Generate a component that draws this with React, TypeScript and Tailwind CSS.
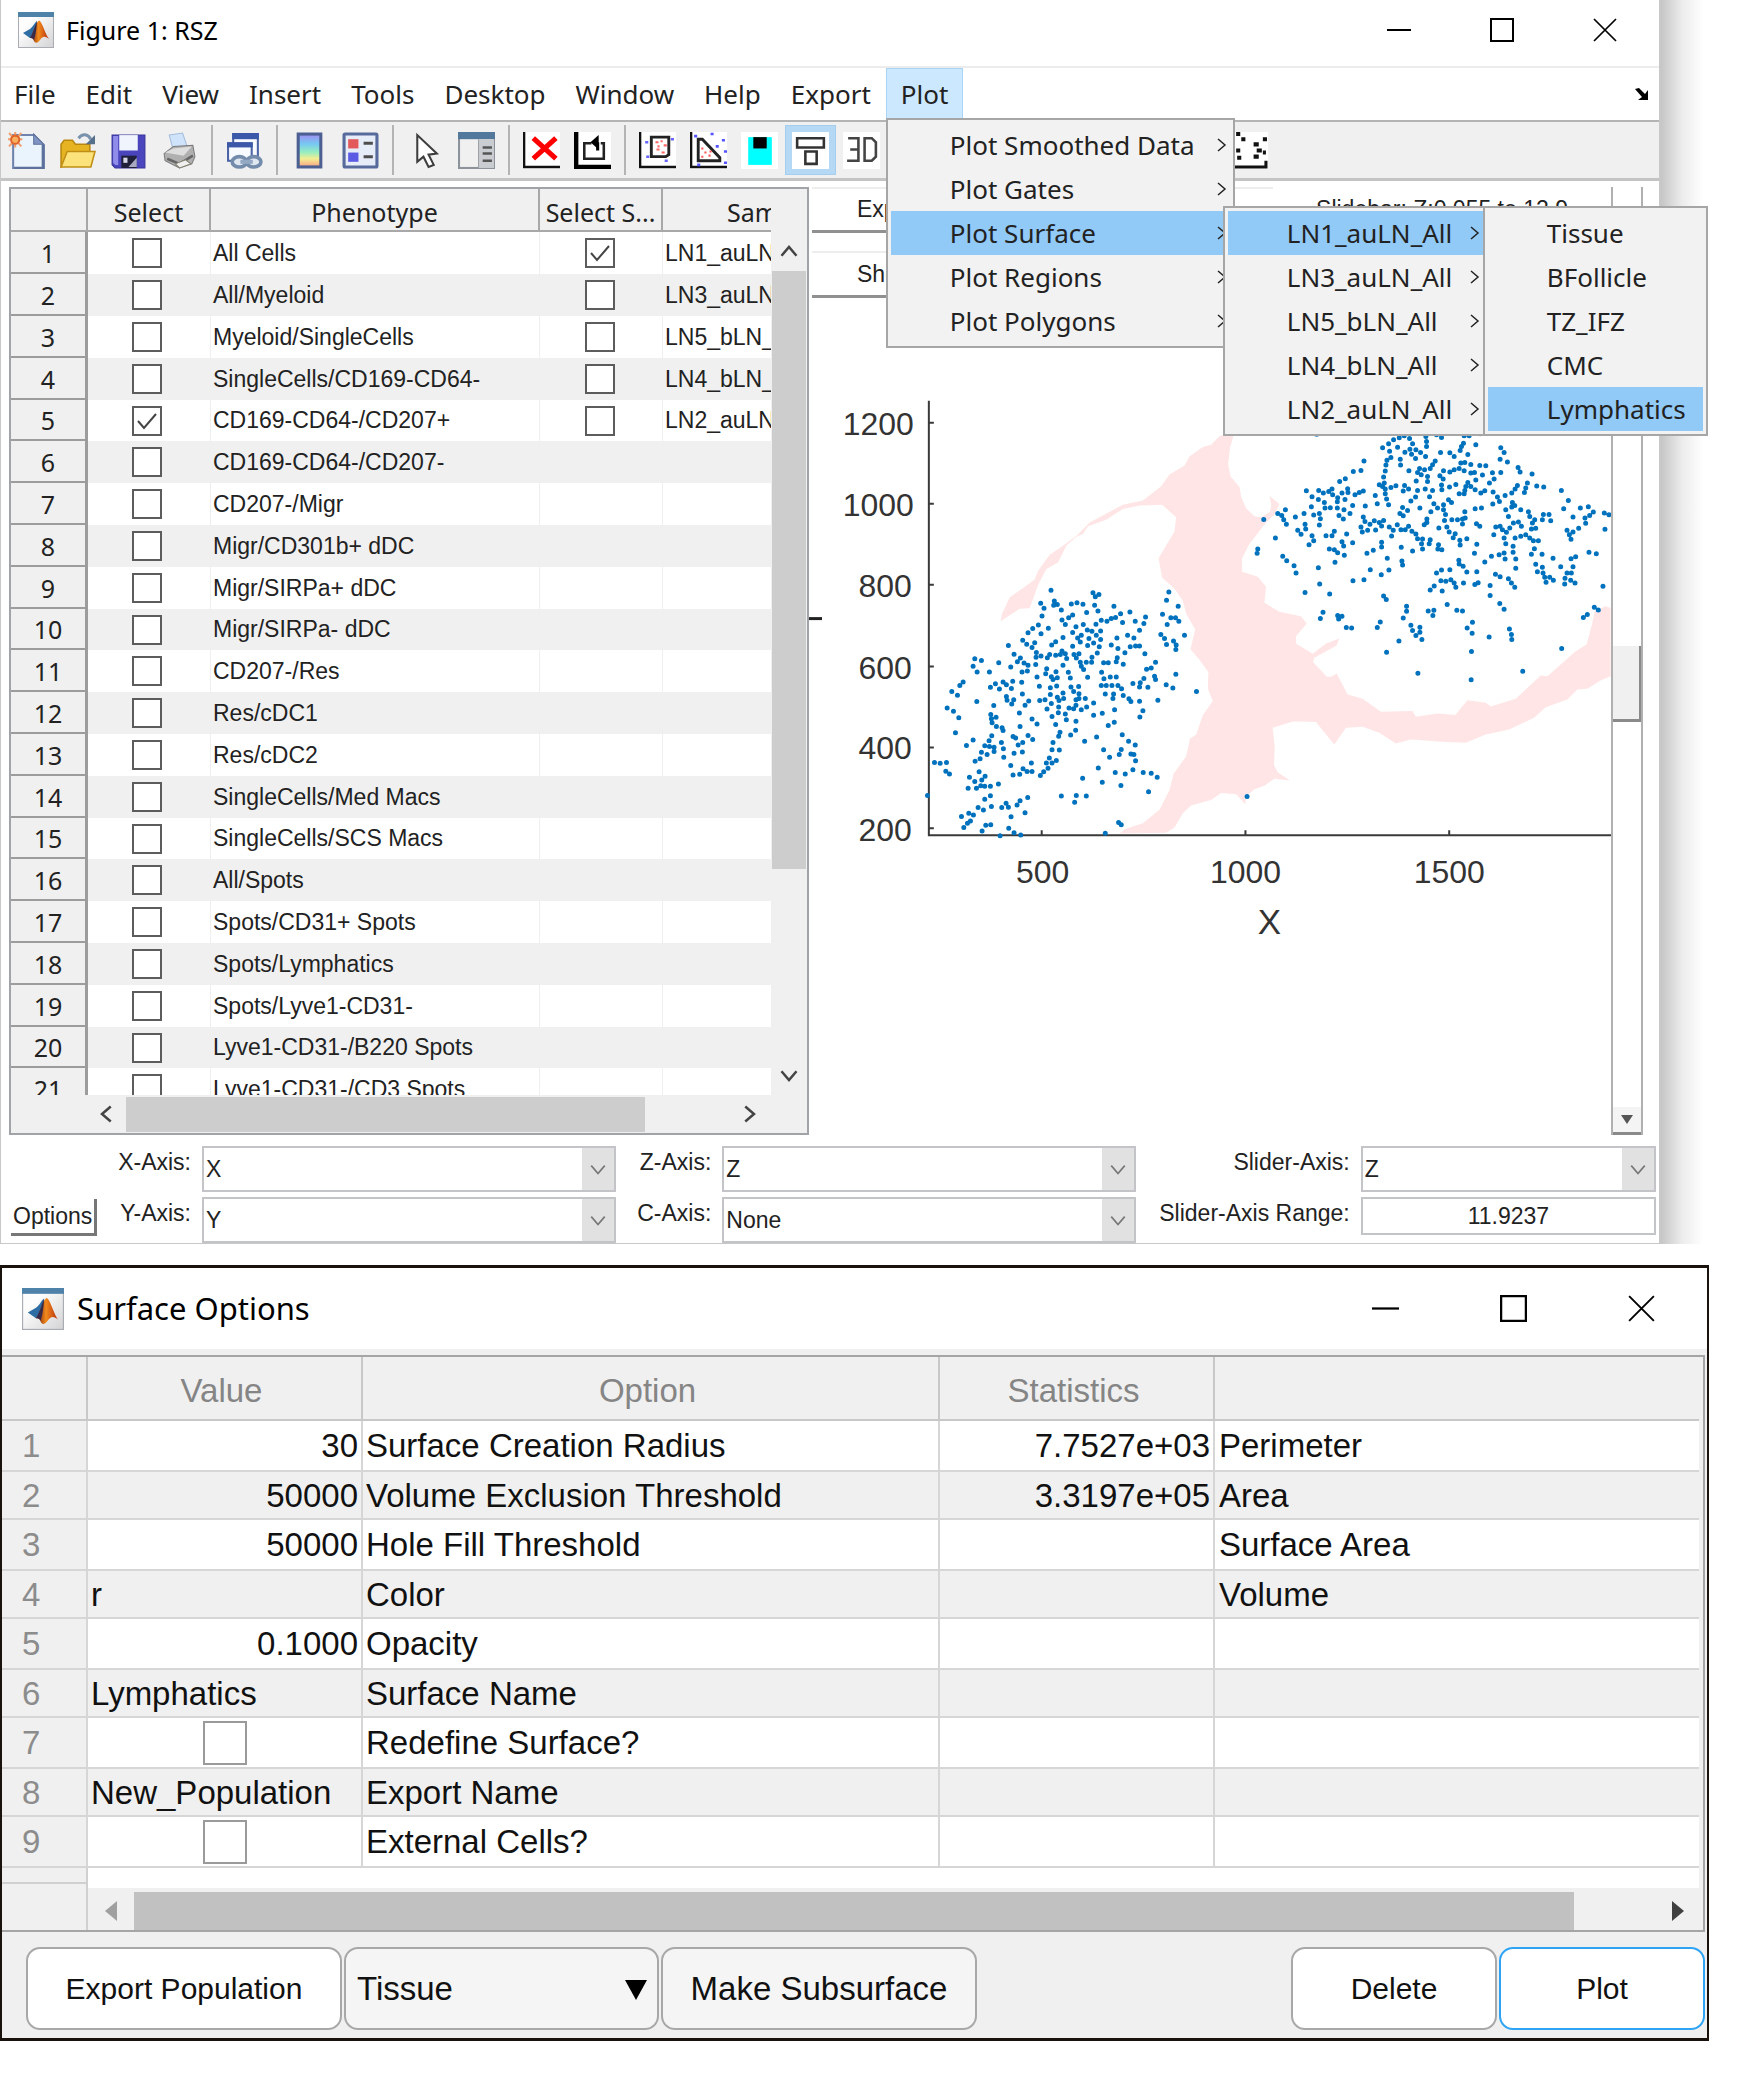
import React from "react";

const SEGOE = "font-['Noto_Sans','Open_Sans',sans-serif]";
const ARIAL = "font-['Liberation_Sans',Arial,sans-serif]";

const phenotypes = [
  "All Cells",
  "All/Myeloid",
  "Myeloid/SingleCells",
  "SingleCells/CD169-CD64-",
  "CD169-CD64-/CD207+",
  "CD169-CD64-/CD207-",
  "CD207-/Migr",
  "Migr/CD301b+ dDC",
  "Migr/SIRPa+ dDC",
  "Migr/SIRPa- dDC",
  "CD207-/Res",
  "Res/cDC1",
  "Res/cDC2",
  "SingleCells/Med Macs",
  "SingleCells/SCS Macs",
  "All/Spots",
  "Spots/CD31+ Spots",
  "Spots/Lymphatics",
  "Spots/Lyve1-CD31-",
  "Lyve1-CD31-/B220 Spots",
  "Lyve1-CD31-/CD3 Spots",
];

const samples = ["LN1_auLN_All", "LN3_auLN_All", "LN5_bLN_All", "LN4_bLN_All", "LN2_auLN_All"];

const leftCells =
  "754,590 880,597 898,602 887,608 723,626 733,640 727,662 764,620 762,632 773,630 815,628 832,625 850,629 885,632 943,635 1108,595 1101,618 1136,635 785,645 861,652 895,648 963,656 991,651 1089,657 819,659 807,667 787,673 797,686 905,674 922,677 935,669 948,666 969,680 1007,677 1038,665 1033,683 1114,667 1128,667 1138,677 1103,686 851,686 889,685 716,687 746,696 699,697 685,709 724,712 829,692 819,708 863,701 877,705 903,704 845,716 890,716 868,725 834,724 1020,702 984,716 1003,724 952,724 1084,714 1095,725 1155,716 1122,732 1130,743 1129,756 1101,742 790,722 768,734 756,743 705,737 669,730 681,741 697,750 626,745 842,735 903,728 882,738 864,745 899,748 819,747 935,743 955,753 1008,746 992,748 1020,746 976,765 1036,768 893,766 643,769 787,760 797,768 710,764 709,778 724,774 743,779 750,770 768,772 782,770 801,781 823,770 838,768 830,780 662,780 653,790 673,794 685,800 708,798 525,782 545,787 520,803 532,819 597,793 569,819 633,805 667,819 683,816 790,800 741,810 738,824 769,818 806,820 842,792 845,803 852,812 860,792 877,778 876,792 912,793 926,793 950,790 953,779 971,797 1068,792 1055,808 1041,811 1129,825 1065,831 1068,840 906,820 913,838 932,833 950,833 864,834 812,836 755,832 773,835 760,840 712,833 639,845 666,848 610,847 620,855 635,865 587,852 572,862 599,867 490,847 480,857 456,874 473,884 719,859 752,863 771,858 814,861 837,860 822,874 905,857 920,857 937,857 955,857 966,866 1000,851 1022,849 1033,837 1020,861 1045,862 1100,855 1120,864 1191,874 752,882 790,878 838,880 838,893 857,893 917,881 942,881 940,893 971,885 988,894 994,902 1020,901 1075,898 882,906 861,917 845,925 668,881 620,888 622,898 642,897 636,909 687,900 676,912 531,902 582,913 720,899 736,897 755,907 773,890 778,899 792,893 742,923 777,917 808,920 822,922 829,912 829,897 776,933 797,937 757,944 659,934 573,938 575,950 589,946 577,961 590,972 607,975 610,983 442,920 461,929 477,947 882,940 908,935 945,925 1030,928 1021,945 800,953 829,957 768,966 712,965 697,951 661,972 944,960 926,969 828,982 813,996 781,988 777,999 891,1001 968,995 987,1013 1007,1024 855,1013 467,989 500,1025 520,1010 576,998 568,1012 555,1026 569,1028 583,1030 583,1042 562,1050 545,1044 605,1017 611,1034 640,1000 648,1004 669,1017 655,1024 685,997 699,1008 760,1017 757,1037 779,1038 912,1037 965,1036 959,1050 930,1058 994,1049 1003,1050 1008,1068 643,1047 668,1043 612,1058 541,1062 526,1069 749,1060 770,1067 740,1074 757,1074 745,1089 732,1099 722,1109 633,1081 695,1074 670,1090 682,1098 697,1098 660,1106 640,1108 404,1073 421,1075 440,1073 438,1097 449,1105 896,1088 849,1117 908,1128 947,1101 977,1105 1000,1093 1031,1101 1055,1103 1073,1114 964,1137 1047,1155 538,1099 509,1114 525,1126 546,1122 556,1111 505,1145 530,1145 543,1138 555,1139 572,1139 596,1133 383,1165 785,1167 830,1165 825,1184 860,1167 572,1166 555,1176 575,1196 535,1199 551,1206 606,1199 619,1187 626,1198 661,1180 652,1192 684,1171 676,1214 634,1225 485,1224 507,1215 521,1220 512,1237 503,1243 492,1255 558,1249 573,1247 547,1265 627,1257 643,1270 601,1278 663,1276 917,1271 957,1241 965,1247 1343,1168";

const rightCells =
  "352,43 615,48 600,54 583,60 568,72 550,84 595,82 571,94 631,56 640,72 632,88 650,90 617,97 680,50 682,65 682,80 712,45 727,53 795,48 810,48 843,42 830,75 793,70 787,80 783,92 806,104 752,99 724,98 765,110 679,110 664,98 649,116 637,103 905,84 915,98 903,118 925,127 957,143 963,157 999,163 575,113 563,121 560,136 558,154 553,172 603,118 604,136 494,124 485,152 462,155 708,124 700,135 693,146 661,146 655,158 676,150 666,165 629,153 733,153 685,170 732,178 722,168 651,184 685,185 752,157 765,150 780,146 785,130 797,128 795,153 815,134 842,137 860,138 850,166 826,158 815,160 880,159 905,158 885,178 871,190 830,181 806,188 438,177 421,185 321,213 338,231 358,212 372,220 388,215 398,208 400,225 357,239 375,248 428,220 445,207 446,218 437,239 415,234 414,246 467,225 480,218 492,214 540,195 550,200 555,190 558,208 558,222 562,238 568,255 575,203 590,198 528,227 534,252 498,259 616,197 628,208 612,214 655,212 678,208 700,212 649,232 635,244 691,231 727,196 728,210 751,202 770,194 800,200 797,212 780,222 795,222 815,200 828,210 845,220 857,213 955,197 948,208 938,220 985,190 980,205 976,218 1013,199 1034,202 1087,212 1108,242 1094,267 882,217 895,232 901,245 881,253 918,227 940,248 748,240 757,248 733,255 704,252 715,265 695,276 662,265 610,263 625,272 602,281 612,288 336,261 314,281 343,286 360,281 363,297 360,316 288,292 377,265 393,264 414,265 434,270 419,287 432,298 452,281 460,257 258,270 235,281 247,287 253,300 261,314 193,299 228,355 317,314 319,328 295,332 305,344 338,348 343,363 329,375 380,348 398,348 405,335 442,343 428,366 433,379 460,369 175,388 173,401 250,410 262,423 284,438 290,460 390,388 405,390 415,399 435,407 407,428 357,444 492,292 497,305 485,322 489,337 505,332 512,314 525,303 540,308 553,302 547,319 529,331 570,322 582,332 577,349 594,315 605,330 618,330 628,320 638,335 650,343 655,357 670,358 667,372 670,388 690,372 693,360 716,388 718,375 728,390 683,298 683,308 675,315 733,270 739,284 736,302 743,322 750,337 719,325 758,300 775,300 790,298 797,276 798,295 790,313 768,342 762,354 782,362 783,376 803,357 833,374 826,401 828,267 847,265 832,312 842,320 920,270 938,262 947,257 965,270 928,290 988,276 992,290 943,310 958,307 967,320 932,325 922,338 890,322 903,320 910,330 884,345 915,355 920,372 948,355 965,350 980,345 992,355 1003,363 1018,363 997,328 1010,326 1000,310 1007,300 1030,300 1033,284 1050,284 1055,303 1122,292 1144,265 1168,261 1183,277 1172,287 1158,295 1160,311 1216,280 1230,285 1218,329 1104,332 1122,337 1139,326 1111,345 1116,359 1170,398 1192,402 942,380 942,398 950,418 918,418 900,405 915,400 877,410 857,427 1006,387 997,404 1029,404 1062,416 1116,417 1130,411 1085,441 1122,441 1010,434 1030,443 1015,456 1032,460 1037,473 1052,473 1063,482 1041,488 1104,460 1117,460 1098,476 1115,482 1128,490 1097,493 1212,500 1186,563 1198,571 1165,585 1153,594 950,446 889,464 903,471 928,477 937,490 947,503 873,498 873,528 833,456 837,489 827,495 793,490 803,457 792,440 779,422 780,433 752,450 727,451 712,460 725,483 740,485 755,480 765,490 770,503 705,499 693,511 729,514 606,383 640,394 547,368 547,382 522,392 503,401 564,416 608,424 610,436 569,451 546,465 513,450 494,480 461,483 361,493 391,523 317,519 553,529 561,540 622,560 622,575 612,595 371,578 363,597 415,588 428,590 418,598 441,624 457,625 543,607 534,624 687,574 704,572 701,588 744,555 773,572 790,574 902,552 915,569 931,628 937,645 938,660 635,617 640,633 662,623 662,638 650,648 668,660 820,608 804,625 819,641 599,664 562,698 870,652 817,696 1088,687 656,761 816,781 971,755";

const dots = (points: string) =>
  points
    .split(" ")
    .map((p) => `M${p.replace(",", " ")}h.01`)
    .join("");

function MatlabIcon({ className }: { className: string }) {
  return (
    <svg viewBox="0 0 36 36" className={className} aria-hidden="true">
      <defs>
        <linearGradient id="mlPaper" x1="0" y1="0" x2="1" y2="1">
          <stop offset="0.3" stopColor="#fdfdfd" />
          <stop offset="1" stopColor="#d3d3d5" />
        </linearGradient>
        <linearGradient id="mlPeak" x1="0" y1="0" x2="1" y2="0">
          <stop offset="0" stopColor="#6b1508" />
          <stop offset="0.45" stopColor="#f28a1c" />
          <stop offset="1" stopColor="#b62e0f" />
        </linearGradient>
      </defs>
      <rect x="0.5" y="0.5" width="35" height="35" fill="url(#mlPaper)" stroke="#a9adb3" />
      <rect x="0" y="0" width="36" height="5" fill="#4f82a8" />
      <path d="M5 21 L12 17 C15 15 17 10 19 9 L17 22 L12 26 Z" fill="#2e6da4" />
      <path d="M12 26 C15 22 18 10 21 8.500 C24 9 27 22 31 27 C27 24 25 24 22 28 C19 32 17 31 16 29 C15 26 13.500 26 12 26 Z" fill="url(#mlPeak)" />
      <path d="M12 26 C15 22 17 13 19 9.500 C18.500 16 18 22 16 28 C15 26 13.500 26 12 26 Z" fill="#3a2a4a" />
    </svg>
  );
}

function WindowButtons({ width, size }: { width: string; size: string }) {
  return (
    <div className="flex self-stretch">
      <button aria-label="Minimize" className={`${width} flex items-center justify-center`}>
        <svg viewBox="0 0 24 24" className={size} stroke="#000" strokeWidth="2" fill="none">
          <path d="M0 12H24" />
        </svg>
      </button>
      <button aria-label="Maximize" className={`${width} flex items-center justify-center`}>
        <svg viewBox="0 0 24 24" className={size} stroke="#000" strokeWidth="2" fill="none">
          <rect x="1" y="1" width="22" height="22" />
        </svg>
      </button>
      <button aria-label="Close" className={`${width} flex items-center justify-center`}>
        <svg viewBox="0 0 24 24" className={size} stroke="#000" strokeWidth="1.700" fill="none">
          <path d="M1 1L23 23M23 1L1 23" />
        </svg>
      </button>
    </div>
  );
}

function Chevron({ dir, className }: { dir: "up" | "down" | "left" | "right"; className: string }) {
  const d = {
    up: "M2 11L8 4L14 11",
    down: "M2 5L8 12L14 5",
    left: "M11 2L4 8L11 14",
    right: "M5 2L12 8L5 14",
  }[dir];
  return (
    <svg viewBox="0 0 16 16" className={className} fill="none" stroke="currentColor" aria-hidden="true">
      <path d={d} />
    </svg>
  );
}

/* ---------- toolbar ---------- */

function ToolButton({ label, pressed, children }: { label: string; pressed?: boolean; children: React.ReactNode }) {
  return (
    <button
      aria-label={label}
      className={`flex h-[50px] w-[51px] shrink-0 items-center justify-center ${pressed ? "border border-[#a5cdee] bg-[#b5d8f4]" : ""}`}
    >
      <svg viewBox="0 0 36 36" className="h-[37px] w-[37px]" fill="none">
        {children}
      </svg>
    </button>
  );
}

const Sep = () => (
  <div className="flex w-[14px] shrink-0 justify-center">
    <div className="h-[50px] w-[2px] bg-[#b4b4b4]" />
  </div>
);

function Toolbar() {
  return (
    <div className="flex h-[61px] items-center border-t-2 border-b-3 border-t-[#b4b4b4] border-b-[#c4c4c4] bg-[#f0f0f0]">
      <ToolButton label="New Figure">
        <path d="M5 3H25L35 13V35H5Z" fill="#eaf4fd" stroke="#6f84ad" strokeWidth="2" />
        <path d="M34 12V35H6" stroke="#5e719c" strokeWidth="2.500" />
        <path d="M25 2V12H35Z" fill="#8094c4" stroke="#5e719c" />
        <path d="M1 1L13 14M13 1L1 14M7 0V15M0 7H14" stroke="#f0a070" strokeWidth="2" />
        <circle cx="7" cy="7.500" r="4" fill="#f9b060" stroke="#e0652a" strokeWidth="2" />
      </ToolButton>
      <ToolButton label="Open File">
        <path d="M2 34V12L5 8H13L16 12H30V20Z" fill="#e6b422" stroke="#b98710" strokeWidth="1.500" />
        <path d="M2 34L8 19H35L31 34Z" fill="#fbe27a" stroke="#c08e14" strokeWidth="1.500" />
        <path d="M19 6C23 1 28 2 31 7" stroke="#7a93ac" strokeWidth="3" />
        <path d="M35 3V12H26Z" fill="#56708c" />
      </ToolButton>
      <ToolButton label="Save Figure">
        <path d="M2 3H34V35H5L2 32Z" fill="#4a45bd" stroke="#38349a" />
        <path d="M3 4H8V32H5L3 30Z" fill="#8f8cea" />
        <rect x="9" y="3" width="18" height="15" fill="#f0f4fc" />
        <rect x="11" y="23" width="15" height="12" fill="#20203a" />
        <rect x="13" y="25" width="4" height="5" fill="#d5d5e8" />
        <path d="M18 34L26 25V34Z" fill="#a9a9c2" />
      </ToolButton>
      <ToolButton label="Print Figure">
        <path d="M8 3L21 1L26 16L12 18Z" fill="#cfe3fb" stroke="#a3bddd" />
        <path d="M3 21L12 14L31 13L33 24L30 31L18 35L4 28Z" fill="#b0b0b0" stroke="#7b7b7b" />
        <path d="M4 20L12 16L30 14L22 23Z" fill="#dedede" />
        <path d="M6 26L18 31L31 23" stroke="#666" strokeWidth="2.500" />
        <path d="M14 31L24 27L29 31L18 35Z" fill="#f0f0f0" stroke="#808070" />
      </ToolButton>
      <Sep />
      <ToolButton label="Link Plot">
        <rect x="7" y="2" width="24" height="22" fill="#f7faff" stroke="#4a63a5" strokeWidth="2" />
        <rect x="6" y="1" width="26" height="6" fill="#3c58a8" />
        <rect x="2" y="11" width="23" height="17" fill="#f7faff" stroke="#4a63a5" strokeWidth="2" />
        <rect x="1" y="10" width="25" height="5" fill="#3c58a8" />
        <ellipse cx="13" cy="29" rx="7" ry="5" fill="#dfe7f1" stroke="#748cab" strokeWidth="3.500" />
        <ellipse cx="27" cy="29" rx="7" ry="5" fill="#dfe7f1" stroke="#748cab" strokeWidth="3.500" />
        <path d="M14 29H26" stroke="#93a8c2" strokeWidth="4" />
      </ToolButton>
      <Sep />
      <ToolButton label="Insert Colorbar">
        <defs>
          <linearGradient id="cbar" x1="0" y1="0" x2="0" y2="1">
            <stop offset="0" stopColor="#a18cf0" />
            <stop offset="0.300" stopColor="#76c8f2" />
            <stop offset="0.550" stopColor="#96eec0" />
            <stop offset="0.750" stopColor="#f4ee92" />
            <stop offset="1" stopColor="#f6a184" />
          </linearGradient>
        </defs>
        <rect x="7" y="2" width="22" height="32" fill="url(#cbar)" stroke="#4c5f92" strokeWidth="3" />
      </ToolButton>
      <ToolButton label="Insert Legend">
        <rect x="2" y="2" width="32" height="32" rx="1" fill="#e7edf8" stroke="#566a9b" strokeWidth="3" />
        <rect x="6" y="7" width="10" height="9" fill="#e35a5a" />
        <rect x="6" y="20" width="10" height="9" fill="#5b5be3" />
        <path d="M21 11H30M21 24H30" stroke="#4d4d4d" strokeWidth="3" />
      </ToolButton>
      <Sep />
      <ToolButton label="Edit Plot">
        <path d="M10 3V29L16 24L21 34L26 32L21 22L29 21Z" fill="#fff" stroke="#3d3d3d" strokeWidth="2" />
      </ToolButton>
      <ToolButton label="Property Inspector">
        <rect x="1" y="1" width="34" height="34" fill="#f0f0f0" stroke="#8d939b" strokeWidth="2" />
        <rect x="0" y="0" width="36" height="7" fill="#52799b" />
        <rect x="20" y="7" width="15" height="28" fill="#c9ccd0" />
        <path d="M20 7V35" stroke="#9da1a6" />
        <path d="M24 15H33M24 21H33M24 28H33" stroke="#555" strokeWidth="2.500" />
      </ToolButton>
      <Sep />
      <ToolButton label="Clear Gate">
        <rect width="36" height="36" fill="#fff" />
        <path d="M1 0V34H36" stroke="#111" strokeWidth="2.500" />
        <path d="M10 6L32 26M32 6L10 26" stroke="#f00" strokeWidth="5" />
      </ToolButton>
      <ToolButton label="Rotate Axes">
        <rect width="36" height="36" fill="#fff" />
        <path d="M2 0V34H36" stroke="#000" strokeWidth="4.500" />
        <path d="M17 11H10V26H29V11H26" stroke="#222" strokeWidth="2.500" />
        <path d="M16 10L24 3V17Z" fill="#000" />
        <path d="M23 10V18" stroke="#000" strokeWidth="3" />
      </ToolButton>
      <Sep />
      <ToolButton label="Rectangle Gate">
        <rect width="36" height="36" fill="#fff" />
        <path d="M1 0V34H36" stroke="#111" strokeWidth="2.500" />
        <path d="M12 5H29V22L26 24H12Z" stroke="#222" strokeWidth="2.800" />
        <path d="M16 10h3M24 13h3M17 17h3M22 20h3M18 14h2M21 9h2" stroke="#f66" strokeWidth="2" />
        <path d="M6 10h3M7 24h3M31 7h3M25 28h3" stroke="#66f" strokeWidth="2.500" />
      </ToolButton>
      <ToolButton label="Polygon Gate">
        <rect width="36" height="36" fill="#fff" />
        <path d="M1 0V34H36" stroke="#111" strokeWidth="2.500" />
        <path d="M8 7H12L29 25V28H8Z" stroke="#222" strokeWidth="2.800" />
        <path d="M11 16h2M14 20h2M18 23h2M11 24h2M19 19h2" stroke="#f55" strokeWidth="2" />
        <path d="M20 2h3M31 8h3M25 14h3M33 19h3M33 30h3M7 32h3M4 4h3" stroke="#55f" strokeWidth="2.500" />
      </ToolButton>
      <ToolButton label="Color">
        <rect width="36" height="36" fill="#fff" />
        <rect x="7" y="5" width="23" height="27" fill="#00ffff" />
        <rect x="12" y="5" width="13" height="11" fill="#000" />
      </ToolButton>
      <ToolButton label="Arrange" pressed>
        <rect width="36" height="36" fill="#fff" />
        <path d="M5 6H31V15H5ZM13 19H24V31H13Z" stroke="#333" strokeWidth="2.500" />
      </ToolButton>
      <ToolButton label="3D">
        <rect width="36" height="36" fill="#fff" />
        <path d="M5 6H15V28H4M7 17H15" stroke="#444" strokeWidth="2.500" />
        <path d="M21 6H28L32 10V24L28 28H21Z" stroke="#444" strokeWidth="2.500" />
      </ToolButton>
      <div className="w-[337px]" />
      <ToolButton label="Scatter">
        <rect width="36" height="36" fill="#fff" />
        <path d="M0 34H34V28" stroke="#111" strokeWidth="3" />
        <path d="M5 2h4M10 7h4M31 7h4M22 12h5M5 18h4M25 18h5M6 25h4M22 24h5M31 20h3" stroke="#111" strokeWidth="4" />
      </ToolButton>
    </div>
  );
}

/* ---------- menus ---------- */

function MenuItem({ label, active, arrow = true, children }: { label: string; active?: boolean; arrow?: boolean; children?: React.ReactNode }) {
  return (
    <li className="relative">
      <button className={`flex h-[44px] w-full items-center pl-[59px] text-left whitespace-nowrap ${active ? "bg-[#91c9f7]" : ""}`}>
        <span className="flex-1">{label}</span>
        {arrow && <Chevron dir="right" className="mr-[1px] h-[16px] w-[16px] stroke-[1.5]" />}
      </button>
      {children}
    </li>
  );
}

const menuBox = "absolute border-2 border-[#a6a6a6] bg-[#f2f2f2] py-[3px] pl-[3px] text-[#222]";

function PlotMenu() {
  return (
    <ul className={`${menuBox} top-full left-0 z-20 mt-[-2px] w-[349px] pr-[3px]`}>
      <MenuItem label="Plot Smoothed Data" />
      <MenuItem label="Plot Gates" />
      <MenuItem label="Plot Surface" active>
        <ul className={`${menuBox} top-[-5px] left-[332px] z-30 w-[262px]`}>
          <MenuItem label="LN1_auLN_All" active>
            <ul className={`${menuBox} top-[-5px] left-[255px] z-40 w-[225px] pr-[3px]`}>
              <MenuItem label="Tissue" arrow={false} />
              <MenuItem label="BFollicle" arrow={false} />
              <MenuItem label="TZ_IFZ" arrow={false} />
              <MenuItem label="CMC" arrow={false} />
              <MenuItem label="Lymphatics" arrow={false} active />
            </ul>
          </MenuItem>
          <MenuItem label="LN3_auLN_All" />
          <MenuItem label="LN5_bLN_All" />
          <MenuItem label="LN4_bLN_All" />
          <MenuItem label="LN2_auLN_All" />
        </ul>
      </MenuItem>
      <MenuItem label="Plot Regions" />
      <MenuItem label="Plot Polygons" />
    </ul>
  );
}

function MenuBar() {
  return (
    <nav className={`${SEGOE} flex h-[54px] items-stretch border-t-2 border-[#ececec] text-[26px] text-[#222]`}>
      {["File", "Edit", "View", "Insert", "Tools", "Desktop", "Window", "Help", "Export"].map((m) => (
        <button key={m} className="px-[15px] first:pl-[13px]">
          {m}
        </button>
      ))}
      <div className="relative flex">
        <button className="border border-[#a9d4f5] bg-[#cce8ff] px-[14px]">Plot</button>
        <PlotMenu />
      </div>
      <button aria-label="Dock" className="mr-[9px] ml-auto">
        <svg viewBox="0 0 16 14" className="h-[14px] w-[16px]">
          <path d="M1 2L5 1L11 7L14 3V13H4L8 10Z" fill="#000" />
        </svg>
      </button>
    </nav>
  );
}

/* ---------- phenotype table ---------- */

function Tick({ label, checked }: { label: string; checked?: boolean }) {
  return (
    <label className="relative mx-auto block h-[30px] w-[30px]">
      <input type="checkbox" aria-label={label} defaultChecked={checked} className="peer block h-[30px] w-[30px] appearance-none border-2 border-[#5c5c5c] bg-white" />
      <svg viewBox="0 0 30 30" className="pointer-events-none absolute inset-0 hidden h-[30px] w-[30px] peer-checked:block" fill="none" stroke="#444" strokeWidth="2">
        <path d="M6 15L12 22L24 8" />
      </svg>
    </label>
  );
}

function PhenotypeTable() {
  const head = "h-[43px] overflow-hidden border-b-2 border-[#a8a8a8] bg-[#f0f0f0] p-0 pt-[6px] font-normal whitespace-nowrap";
  return (
    <div className="ml-[8px] grid w-[800px] shrink-0 grid-cols-[1fr_36px] grid-rows-[906px_38px] border-2 border-[#a0a3a8] bg-[#f0f0f0]">
      <div className="overflow-hidden">
        <table className={`${ARIAL} w-full table-fixed border-separate border-spacing-0 text-[23px] leading-none text-[#222]`}>
          <colgroup>
            <col className="w-[77px]" />
            <col className="w-[123px]" />
            <col className="w-[329px]" />
            <col className="w-[123px]" />
            <col />
          </colgroup>
          <thead>
            <tr className={`${SEGOE} text-[25px]`}>
              <th className={`${head} border-r-2`} aria-label="Row" />
              <th className={`${head} border-r-2`}>Select</th>
              <th className={`${head} border-r-2`}>Phenotype</th>
              <th className={`${head} border-r-2`}>Select S...</th>
              <th className={`${head} pl-[64px] text-left`}>Sample</th>
            </tr>
          </thead>
          <tbody>
            {phenotypes.map((name, i) => (
              <tr key={name} className="h-[42px] odd:bg-white even:bg-[#f0f0f0] nth-[5n]:h-[41px]">
                <th className={`${SEGOE} border-r-3 border-b-2 border-[#9c9c9c] bg-[#f0f0f0] p-0 pt-[2px] text-[25px] font-normal`}>{i + 1}</th>
                <td className="border-r border-[#efefef] p-0 pr-[4px]">
                  <Tick label={`Select ${name}`} checked={i === 4} />
                </td>
                <td className="border-r border-[#efefef] p-0 pl-[2px] whitespace-nowrap">{name}</td>
                <td className="border-r border-[#efefef] p-0 pr-[2px]">{i < 5 && <Tick label={`Select ${samples[i]}`} checked={i === 0} />}</td>
                <td className="overflow-hidden p-0 pl-[2px] whitespace-nowrap">{samples[i]}</td>
              </tr>
            ))}
          </tbody>
        </table>
      </div>
      <div className="flex flex-col items-center pt-[43px] text-[#444]">
        <button aria-label="Scroll up" className="flex h-[39px] w-full items-center justify-center">
          <Chevron dir="up" className="h-[20px] w-[20px] stroke-2" />
        </button>
        <div className="h-[598px] w-[34px] bg-[#cdcdcd]" />
        <button aria-label="Scroll down" className="mt-auto flex h-[41px] w-full items-center justify-center">
          <Chevron dir="down" className="h-[20px] w-[20px] stroke-2" />
        </button>
      </div>
      <div className="flex items-center pl-[77px] text-[#444]">
        <button aria-label="Scroll left" className="flex h-full w-[38px] items-center justify-center">
          <Chevron dir="left" className="h-[20px] w-[20px] stroke-2" />
        </button>
        <div className="h-[35px] w-[519px] bg-[#cdcdcd]" />
        <button aria-label="Scroll right" className="ml-auto flex h-full w-[45px] items-center justify-center">
          <Chevron dir="right" className="h-[20px] w-[20px] stroke-2" />
        </button>
      </div>
    </div>
  );
}

/* ---------- scatter plot ---------- */

function ScatterPlot() {
  return (
    <svg viewBox="809 298 803 662" className={`${ARIAL} block w-full`} role="img" aria-label="Cell positions with lymphatics surface">
      <g fill="#ffe5e5">
        <path
          transform="translate(800 380) scale(.3333 .3571)"
          d="M1307 140L1292 190L1286 235L1293 270L1320 300L1326 330L1340 360L1365 382L1385 385L1412 370L1416 350L1410 325L1440 348L1425 378L1400 400L1350 460L1328 500L1328 538L1375 552L1400 580L1395 625L1440 650L1490 660V740L1600 850L1560 955L1480 958L1420 975L1426 1030L1424 1080L1435 1100L1472 1123L1425 1118L1395 1138L1365 1148L1340 1168L1338 1190L1310 1162L1265 1158L1235 1178L1175 1193L1150 1215L1125 1255L1100 1270L960 1272L975 1260L1030 1243L1080 1205L1110 1150L1122 1105L1160 1055L1172 1005L1190 995L1210 940L1240 900L1225 865L1227 820L1200 785L1173 755L1187 700L1160 655L1150 620L1125 585L1088 555L1077 500L1125 425L1130 385L1088 350L1020 352L970 362L920 392L865 410L850 432L830 440L800 465L775 512L740 530L715 575L700 615L690 640L660 642L630 660L603 677L607 655L630 610L705 560L715 535L750 490L790 465L830 438L870 400L970 350L1030 338L1085 298L1110 265L1155 240L1170 215L1210 188L1235 182L1260 158Z"
        />
        <path
          transform="translate(1200 420) scale(.3333)"
          d="M190 550L240 578L305 590L322 612L290 650L287 670L340 703L380 672L420 657L412 678L345 715L338 738L360 772L395 772L412 762L445 825L490 838L545 877L640 875L650 892L715 882L768 887L805 842L860 850L875 861L950 838L1025 768L1045 770L1130 695L1163 675L1180 610L1187 575L1220 560L1235 565V770L1205 783L1165 808L1135 810L1105 840L1040 863L1005 895L930 930L860 945L800 970L740 968L635 960L590 972L540 940L490 922L440 925L405 975L380 945L350 908L275 905L215 925L150 930L100 700Z"
        />
      </g>
      <path d="M929 401V836H1612M929 423h5M929 504h5M929 585h5M929 667h5M929 748h5M929 829h5M1042 836v-5M1246 836v-5M1450 836v-5" fill="none" stroke="#3a3a3a" strokeWidth="2" />
      <g fill="none" stroke="#0072bd" strokeWidth="5" strokeLinecap="round">
        <path transform="translate(800 380) scale(.3333 .3571)" d={dots(leftCells)} vectorEffect="non-scaling-stroke" />
        <path transform="translate(1200 420) scale(.3333)" d={dots(rightCells)} vectorEffect="non-scaling-stroke" />
      </g>
      <path d="M809 619H822" stroke="#222" strokeWidth="3" />
      <g fontSize="32" fill="#333" textAnchor="end">
        <text x="914" y="435">1200</text>
        <text x="914" y="516">1000</text>
        <text x="912" y="597">800</text>
        <text x="912" y="679">600</text>
        <text x="912" y="760">400</text>
        <text x="912" y="842">200</text>
      </g>
      <g fontSize="32" fill="#333" textAnchor="middle">
        <text x="1043" y="884">500</text>
        <text x="1246" y="884">1000</text>
        <text x="1450" y="884">1500</text>
        <text x="1270" y="935" fontSize="35">
          X
        </text>
      </g>
    </svg>
  );
}

/* ---------- axis selectors ---------- */

function AxisSelect({ id, value }: { id: string; value: string }) {
  return (
    <div className="relative h-[46px]">
      <select id={id} defaultValue={value} className="h-full w-full appearance-none border-2 border-[#c3c4c8] bg-white pl-[2px] text-[23px]">
        <option>{value}</option>
      </select>
      <div className="pointer-events-none absolute inset-y-[2px] right-[2px] flex w-[32px] items-center justify-center bg-[#e1e1e1] text-[#777]">
        <Chevron dir="down" className="h-[18px] w-[18px] stroke-[1.5]" />
      </div>
    </div>
  );
}

const axisLabel = "pr-[11px] text-right leading-[32px] whitespace-nowrap";

function AxisControls() {
  return (
    <div className={`${ARIAL} grid grid-cols-[201px_414fr_106px_413fr_225px_295fr] gap-y-[5px] pt-[11px] pr-[3px] text-[23px] text-[#222]`}>
      <label htmlFor="x-axis" className={axisLabel}>
        X-Axis:
      </label>
      <AxisSelect id="x-axis" value="X" />
      <label htmlFor="z-axis" className={axisLabel}>
        Z-Axis:
      </label>
      <AxisSelect id="z-axis" value="Z" />
      <label htmlFor="s-axis" className={axisLabel}>
        Slider-Axis:
      </label>
      <AxisSelect id="s-axis" value="Z" />
      <div className="flex items-start justify-between">
        <button className="mt-[2px] ml-[10px] h-[37px] border-r-3 border-b-3 border-[#777] px-[2px] leading-none">Options</button>
        <label htmlFor="y-axis" className={axisLabel}>
          Y-Axis:
        </label>
      </div>
      <AxisSelect id="y-axis" value="Y" />
      <label htmlFor="c-axis" className={axisLabel}>
        C-Axis:
      </label>
      <AxisSelect id="c-axis" value="None" />
      <label htmlFor="s-range" className={axisLabel}>
        Slider-Axis Range:
      </label>
      <input id="s-range" defaultValue="11.9237" className="h-[38px] w-full border-2 border-[#c3c4c8] bg-white text-center" />
    </div>
  );
}

function FigureWindow() {
  return (
    <div className="flex pr-[41px]">
      <section className="min-w-0 flex-1 border-r-2 border-b border-l border-[#c8c8c8] bg-white">
        <header className="flex h-[66px] items-center pl-[17px]">
          <MatlabIcon className="mt-[-6px] h-[36px] w-[36px]" />
          <h1 className={`${SEGOE} mt-[-4px] flex-1 pl-[12px] text-[25px] text-black`}>Figure 1: RSZ</h1>
          <div className="mb-[6px] flex self-stretch pr-[3px]">
            <WindowButtons width="w-[103px]" size="h-[24px] w-[24px]" />
          </div>
        </header>
        <MenuBar />
        <Toolbar />
        <div className="flex pt-[6px]">
          <PhenotypeTable />
          <div className="flex min-w-0 flex-1 flex-col">
            <div className={`${ARIAL} flex h-[111px] text-[23px] text-[#222]`}>
              <div className="flex flex-1 flex-col justify-between pl-[3px]">
                <button className="h-[46px] border-t-2 border-b-3 border-t-[#ededed] border-b-[#909090] pl-[45px] text-left">Export</button>
                <button className="h-[47px] border-t-2 border-b-3 border-t-[#ededed] border-b-[#909090] pl-[45px] text-left">Show</button>
              </div>
              <p className="w-[338px] pt-[5px] text-center whitespace-nowrap">Slidebar: Z:0.055 to 12.9</p>
            </div>
            <ScatterPlot />
          </div>
          <div className="mr-[16px] flex w-[32px] flex-col border-x-2 border-[#b0b0b0]">
            <button aria-label="Slider" className="mt-[459px] h-[76px] border-r-2 border-b-3 border-[#8a8a8a] bg-[#f0f0f0]" />
            <button aria-label="Slider down" className="mt-auto flex h-[28px] items-center justify-center border-b-3 border-[#8a8a8a] bg-[#f4f4f4]">
              <svg viewBox="0 0 12 9" className="h-[9px] w-[12px]">
                <path d="M0 0H12L6 9Z" fill="#555" />
              </svg>
            </button>
          </div>
        </div>
        <AxisControls />
      </section>
      <div className="w-[42px] bg-linear-to-r from-[#c6c6c6] via-[#ececec] to-white" />
    </div>
  );
}

/* ---------- surface options ---------- */

type Row = [value: string, option: string, stat: string, statName: string];

const optionRows: Row[] = [
  ["30", "Surface Creation Radius", "7.7527e+03", "Perimeter"],
  ["50000", "Volume Exclusion Threshold", "3.3197e+05", "Area"],
  ["50000", "Hole Fill Threshold", "", "Surface Area"],
  ["r", "Color", "", "Volume"],
  ["0.1000", "Opacity", "", ""],
  ["Lymphatics", "Surface Name", "", ""],
  ["", "Redefine Surface?", "", ""],
  ["New_Population", "Export Name", "", ""],
  ["", "External Cells?", "", ""],
];

function SurfaceOptionsWindow() {
  const head = "h-[64px] border-b-2 border-r-2 border-[#c8c8c8] bg-[#f0f0f0] p-0 pt-[4px] pr-[6px] font-normal text-[#858585]";
  const cell = "border-b-2 border-r-2 border-[#d6d6d6] p-0 whitespace-nowrap";
  const pushButton = "h-[83px] rounded-[14px] border-2 border-[#a8a8a8]";
  return (
    <section className={`${ARIAL} mt-[21px] mr-[35px] border-2 border-t-3 border-b-3 border-[#1a120c] bg-[#f0f0f0] text-[33px] leading-none text-[#111]`}>
      <header className="flex h-[81px] items-center bg-white pl-[20px]">
        <MatlabIcon className="h-[42px] w-[42px]" />
        <h2 className={`${SEGOE} flex-1 pl-[13px] text-[31px] text-black`}>Surface Options</h2>
        <div className="flex self-stretch pr-[2px]">
          <WindowButtons width="w-[128px]" size="h-[27px] w-[27px]" />
        </div>
      </header>
      <div className="mt-[6px] mr-[2px] border-y-2 border-r-2 border-[#a5a5a5]">
        <div className="pr-[4px]">
          <table className="w-full table-fixed border-separate border-spacing-0">
            <colgroup>
              <col className="w-[86px]" />
              <col className="w-[275px]" />
              <col className="w-[577px]" />
              <col className="w-[275px]" />
              <col />
            </colgroup>
            <thead>
              <tr>
                <th className={head} aria-label="Row" />
                <th className={head}>Value</th>
                <th className={head}>Option</th>
                <th className={head}>Statistics</th>
                <th className="border-b-2 border-[#c8c8c8] p-0" aria-label="Statistic name" />
              </tr>
            </thead>
            <tbody>
              {optionRows.map(([value, option, stat, statName], i) => (
                <tr key={option} className="odd:h-[51px] odd:bg-white even:h-[48px] even:bg-[#f0f0f0]">
                  <th className={`${cell} bg-[#f0f0f0] pl-[20px] text-left font-normal text-[#8c8c8c]`}>{i + 1}</th>
                  <td className={`${cell} px-[3px] ${/^\d/.test(value) ? "text-right" : ""}`}>
                    {value || <input type="checkbox" aria-label={option} className="mx-auto block h-[44px] w-[44px] appearance-none border-2 border-[#9a9a9a] bg-white" />}
                  </td>
                  <td className={`${cell} pl-[3px]`}>{option}</td>
                  <td className={`${cell} pr-[3px] text-right`}>{stat}</td>
                  <td className="border-b-2 border-[#d6d6d6] p-0 pl-[4px]">{statName}</td>
                </tr>
              ))}
            </tbody>
          </table>
        </div>
        <div className="flex">
          <div className="w-[86px] border-r-2 border-[#d0d0d0]">
            <div className="h-[16px] border-b-2 border-[#d0d0d0]" />
          </div>
          <div className="mr-[4px] flex-1">
            <div className="h-[20px] bg-white" />
            <div className="flex h-[42px] items-center pt-[4px]">
              <button aria-label="Scroll left" className="flex w-[46px] items-center justify-center">
                <svg viewBox="0 0 12 20" className="h-[20px] w-[12px]">
                  <path d="M12 0V20L0 10Z" fill="#a0a0a0" />
                </svg>
              </button>
              <div className="h-[38px] flex-1 bg-[#c1c1c1]" />
              <button aria-label="Scroll right" className="flex w-[125px] justify-end pr-[15px]">
                <svg viewBox="0 0 12 20" className="h-[20px] w-[12px]">
                  <path d="M0 0V20L12 10Z" fill="#404040" />
                </svg>
              </button>
            </div>
          </div>
        </div>
      </div>
      <footer className="flex gap-[2px] pt-[15px] pr-[2px] pb-[8px] pl-[24px]">
        <button className={`${pushButton} w-[316px] bg-white text-[30px]`}>Export Population</button>
        <div className="relative w-[315px]">
          <select aria-label="Surface" defaultValue="Tissue" className={`${pushButton} w-full appearance-none bg-[#f5f5f5] pl-[11px] text-[33px]`}>
            <option>Tissue</option>
          </select>
          <svg viewBox="0 0 22 20" className="pointer-events-none absolute top-[33px] right-[12px] h-[20px] w-[22px]">
            <path d="M0 0H22L11 20Z" fill="#000" />
          </svg>
        </div>
        <button className={`${pushButton} w-[316px] bg-[#f5f5f5] text-[33px]`}>Make Subsurface</button>
        <button className={`${pushButton} ml-auto w-[206px] bg-white text-[30px]`}>Delete</button>
        <button className="h-[83px] w-[206px] rounded-[14px] border-2 border-[#2fa4f5] bg-white text-[30px]">Plot</button>
      </footer>
    </section>
  );
}

export default function App() {
  return (
    <main className="min-h-screen bg-white">
      <FigureWindow />
      <SurfaceOptionsWindow />
    </main>
  );
}
